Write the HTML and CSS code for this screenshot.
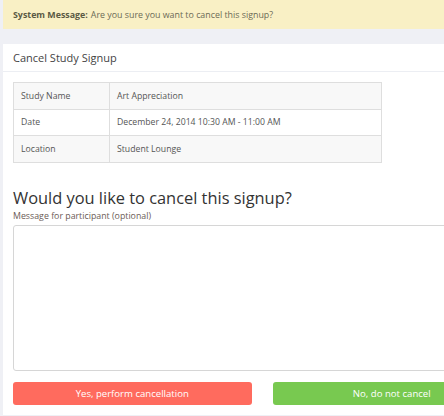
FILE: index.html
```html
<!DOCTYPE html>
<html lang="en">
  <head>
    <meta charset="UTF-8" />
    <meta name="viewport" content="width=device-width, initial-scale=1.0" />
    <title>Cancel Study Signup</title>
    <link rel="stylesheet" href="styles.css">
  </head>
  <body>
    <div class="page">
      <div class="alert">
        <strong>System Message:</strong> Are you sure you want to cancel this signup?
      </div>
      <div class="panel">
        <div class="panel-heading">Cancel Study Signup</div>
        <div class="panel-body">
          <table class="info-table">
            <tr>
              <td class="label-col">Study Name</td>
              <td>Art Appreciation</td>
            </tr>
            <tr>
              <td class="label-col">Date</td>
              <td>December 24, 2014 10:30 AM - 11:00 AM</td>
            </tr>
            <tr>
              <td class="label-col">Location</td>
              <td>Student Lounge</td>
            </tr>
          </table>

          <form class="cancel-form">
            <h2>Would you like to cancel this signup?</h2>
            <label for="message">Message for participant (optional)</label>
            <textarea id="message" name="message"></textarea>
            <div class="actions">
              <button type="submit" class="btn btn-danger">Yes, perform cancellation</button>
              <button type="button" class="btn btn-success">No, do not cancel</button>
            </div>
          </form>
        </div>
      </div>
    </div>
  </body>
</html>
```

FILE: styles.css
```css
body {
  margin: 0;
  background-color: #eff0f5;
  font-family: "Open Sans", "Liberation Sans", sans-serif;
  color: #555;
  overflow: hidden;
}
.page {
  width: 518px;
  padding-left: 3px;
}
.alert {
  height: 29px;
  display: flex;
  align-items: center;
  padding: 0 10px;
  background-color: #f9f0c5;
  color: #6b6a55;
  font-size: 8.85px;
  margin-bottom: 15px;
}
.alert strong {
  color: #5b5a44;
  margin-right: 3px;
}
.panel {
  background-color: #fff;
}
.panel-heading {
  height: 27px;
  display: flex;
  align-items: center;
  padding: 0 10px;
  border-bottom: 1px solid #eceef3;
  font-size: 11px;
  color: #444;
}
.panel-body {
  padding: 10px 10px 10px 10px;
}
.info-table {
  border-collapse: collapse;
  width: 369px;
  font-size: 8.7px;
}
.info-table td {
  border: 1px solid #dedede;
  height: 25.5px;
  padding: 0 7px;
  color: #555;
}
.info-table tr:nth-child(odd) td {
  background-color: #f8f8f8;
}
.info-table .label-col {
  width: 81px;
}
.cancel-form h2 {
  margin: 23px 0 0;
  font-size: 16.4px;
  font-weight: normal;
  color: #333;
  line-height: 24px;
}
.cancel-form label {
  display: block;
  font-size: 8.8px;
  color: #6b5b55;
  margin-top: 0;
  line-height: 12px;
}
.cancel-form textarea {
  display: block;
  box-sizing: border-box;
  width: 100%;
  height: 146px;
  margin-top: 3px;
  border: 1px solid #d6d6d6;
  border-radius: 3px;
  resize: none;
}
.actions {
  display: flex;
  gap: 21px;
  margin-top: 11px;
}
.btn {
  flex: 1;
  height: 23px;
  border: none;
  border-radius: 3px;
  color: #fff;
  font-family: "Open Sans", "Liberation Sans", sans-serif;
  font-size: 9.6px;
}
.btn-danger {
  background-color: #ff6b5e;
}
.btn-success {
  background-color: #78c950;
}
```
